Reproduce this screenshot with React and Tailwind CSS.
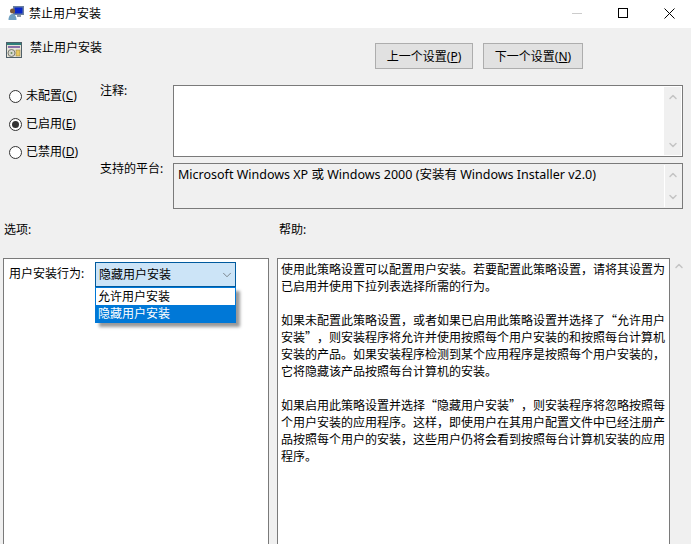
import React from 'react'
import { ChevronDown, ChevronUp } from 'lucide-react'

const font = 'font-["Noto_Sans","Noto_Sans_CJK_SC",sans-serif]'

const helpLines = [
  '使用此策略设置可以配置用户安装。若要配置此策略设置，请将其设置为',
  '已启用并使用下拉列表选择所需的行为。',
  '',
  '如果未配置此策略设置，或者如果已启用此策略设置并选择了“允许用户',
  '安装”，则安装程序将允许并使用按照每个用户安装的和按照每台计算机',
  '安装的产品。如果安装程序检测到某个应用程序是按照每个用户安装的，',
  '它将隐藏该产品按照每台计算机的安装。',
  '',
  '如果启用此策略设置并选择“隐藏用户安装”，则安装程序将忽略按照每',
  '个用户安装的应用程序。这样，即使用户在其用户配置文件中已经注册产',
  '品按照每个用户的安装，这些用户仍将会看到按照每台计算机安装的应用',
  '程序。',
]

function WinIcon() {
  return (
    <svg width="16" height="16" viewBox="0 0 16 16" className="shrink-0">
      <rect x="5" y="1" width="11" height="9" fill="#6a7f9f" />
      <rect x="6.5" y="2.5" width="8" height="6" fill="#0a28c8" />
      <rect x="9" y="10" width="4" height="2" fill="#8a97a8" />
      <circle cx="4.5" cy="6" r="2.5" fill="#7a5a3a" />
      <path d="M0.5 15c0-4 2-6 4-6s4 2 4 6z" fill="#6f9fc0" />
    </svg>
  )
}

function PolicyIcon() {
  return (
    <svg width="16" height="16" viewBox="0 0 16 16" className="shrink-0">
      <rect x="0.5" y="0.5" width="15" height="15" fill="#e8e4d8" stroke="#50606a" />
      <rect x="1" y="1" width="14" height="2" fill="#2f7f7a" />
      <rect x="2" y="4" width="12" height="2" fill="#8a6fa8" />
      <circle cx="5.5" cy="11" r="3.5" fill="#d8d8d0" stroke="#7a7a70" />
      <circle cx="5.5" cy="11" r="1" fill="#6a8a5a" />
      <rect x="10" y="8" width="4" height="6" fill="#e8c860" stroke="#8a7a40" strokeWidth="0.5" />
    </svg>
  )
}

function ScrollArrows({ className }) {
  return (
    <div className={`flex w-[17px] shrink-0 flex-col justify-between py-1 text-[#c4c4c4] ${className}`}>
      <ChevronUp size={12} strokeWidth={3} className="mx-auto" />
      <ChevronDown size={12} strokeWidth={3} className="mx-auto" />
    </div>
  )
}

function RadioRow({ name, k, checked }) {
  return (
    <div className="flex h-7 items-center gap-1">
      <span className="flex h-[13px] w-[13px] shrink-0 items-center justify-center rounded-full border border-[#333] bg-white">
        {checked && <span className="h-[7px] w-[7px] rounded-full bg-[#333]" />}
      </span>
      <span className="mt-[-2px] whitespace-nowrap">{name}(<span className="underline">{k}</span>)</span>
    </div>
  )
}

export default function App() {
  return (
    <div className={`flex h-[544px] w-[691px] flex-col overflow-hidden bg-[#f0f0f0] text-[12px] leading-[17px] text-black ${font}`}>
      {/* title bar */}
      <div className="flex h-7 shrink-0 items-center bg-white pb-[2px] pl-2">
        <WinIcon />
        <span className="ml-[5px]">禁止用户安装</span>
        <div className="ml-auto mr-[-1px] flex items-center">
          <div className="flex w-[46px] justify-center"><div className="h-px w-[10px] bg-[#cccccc]" /></div>
          <div className="flex w-[46px] justify-center"><div className="h-[10px] w-[10px] border border-black" /></div>
          <div className="flex w-[46px] justify-center">
            <svg width="11" height="11" viewBox="0 0 11 11"><path d="M0.5 0.5l10 10M10.5 0.5l-10 10" stroke="#000" fill="none" /></svg>
          </div>
        </div>
      </div>

      {/* policy name and nav buttons */}
      <div className="flex h-[57px] shrink-0 pl-[6px]">
        <div className="mt-[11px] flex items-start">
          <span className="mt-[3px]"><PolicyIcon /></span>
          <span className="ml-2">禁止用户安装</span>
        </div>
        <div className="ml-[273px] mt-[15px] flex gap-[10px]">
          <button className="h-[26px] w-[98px] border border-[#adadad] bg-[#e1e1e1]">上一个设置(<span className="underline">P</span>)</button>
          <button className="h-[26px] w-[100px] border border-[#adadad] bg-[#e1e1e1]">下一个设置(<span className="underline">N</span>)</button>
        </div>
      </div>

      {/* state and comment */}
      <div className="flex shrink-0 pr-2 pl-[9px]">
        <div className="w-[91px] shrink-0">
          <div className="mt-[-3px]">
            <RadioRow name="未配置" k="C" />
            <RadioRow name="已启用" k="E" checked />
            <RadioRow name="已禁用" k="D" />
          </div>
        </div>
        <div className="flex-1">
          <div className="flex">
            <span className="mt-[-3px] w-[73px] shrink-0">注释:</span>
            <div className="flex h-[72px] flex-1 justify-end border border-[#7a7a7a] bg-white p-px">
              <ScrollArrows className="bg-[#f0f0f0]" />
            </div>
          </div>
          <div className="mt-[6px] flex">
            <span className="mt-[-3px] w-[73px] shrink-0">支持的平台:</span>
            <div className="flex h-[46px] flex-1 border border-[#7a7a7a] bg-[#f0f0f0] p-px">
              <div className="flex-1 whitespace-nowrap pl-[3px] pt-[1px] text-[12.5px]">Microsoft Windows XP 或 Windows 2000 (安装有 Windows Installer v2.0)</div>
              <ScrollArrows className="border-l border-white" />
            </div>
          </div>
        </div>
      </div>

      {/* section labels */}
      <div className="mt-3 flex h-[37px] shrink-0 pl-[4px]">
        <span className="w-[275px]">选项:</span>
        <span>帮助:</span>
      </div>

      {/* options and help */}
      <div className="flex min-h-0 flex-1 pl-[3px]">
        <div className="relative mb-[-4px] w-[266px] shrink-0 border border-[#7a7a7a] bg-white pl-[5px] pt-[6px]">
          <div className="flex">
            <span className="w-[86px] shrink-0">用户安装行为:</span>
            <div className="relative mt-[-3px]">
              <div className="flex h-[25px] w-[141px] items-center justify-between border border-[#005a9e] bg-[#cce4f7] pl-[3px] pr-px">
                <span>隐藏用户安装</span>
                <ChevronDown size={14} strokeWidth={1} className="text-[#444]" />
              </div>
              <div className="absolute left-0 top-[25px] w-[141px] border border-[#0078d7] bg-white shadow-[4px_4px_3px_rgba(0,0,0,0.4)]">
                <div className="h-[17px] pl-[2px]">允许用户安装</div>
                <div className="h-[17px] bg-[#0078d7] pl-[2px] text-white">隐藏用户安装</div>
              </div>
            </div>
          </div>
        </div>
        <div className='mb-[-4px] ml-2 w-[393px] shrink-0 border border-[#7a7a7a] bg-white pl-[3px] pt-px font-["Noto_Sans_CJK_SC",sans-serif] [text-spacing-trim:space-all]'>
          {helpLines.map((line, i) => (
            <div key={i} className="h-[17px] whitespace-nowrap">{line}</div>
          ))}
        </div>
        <div className="flex w-[17px] justify-center pt-[2px] text-[#c4c4c4]">
          <ChevronUp size={12} strokeWidth={3} />
        </div>
      </div>
    </div>
  )
}
